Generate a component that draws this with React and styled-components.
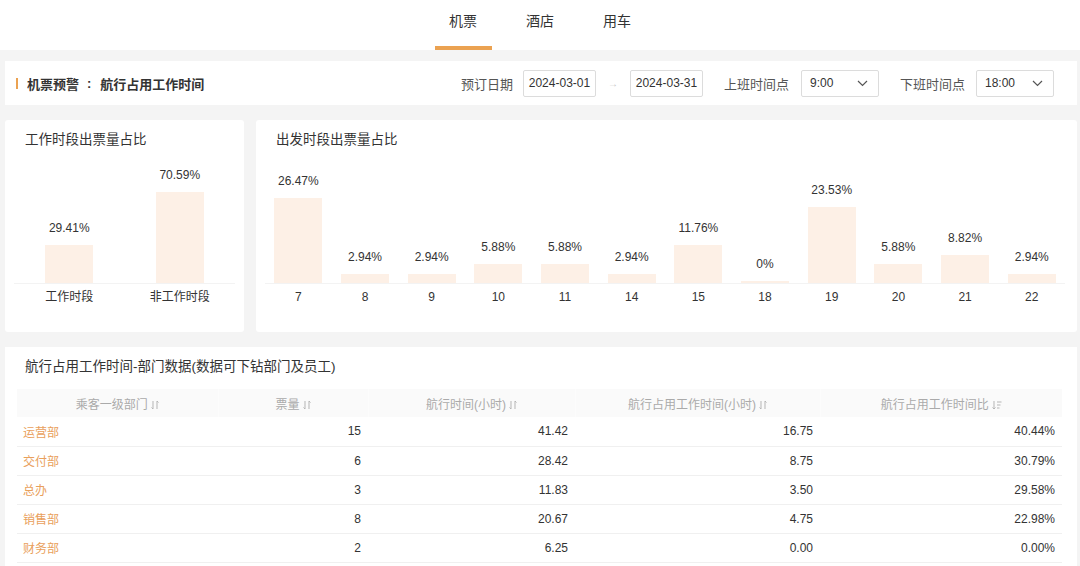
import React from "react";
import styled, { createGlobalStyle } from "styled-components";

const ORANGE = "#eba251";

const workData = [
  { label: "工作时段", value: 29.41 },
  { label: "非工作时段", value: 70.59 },
];

const hourData = [
  { label: "7", value: 26.47 },
  { label: "8", value: 2.94 },
  { label: "9", value: 2.94 },
  { label: "10", value: 5.88 },
  { label: "11", value: 5.88 },
  { label: "14", value: 2.94 },
  { label: "15", value: 11.76 },
  { label: "18", value: 0 },
  { label: "19", value: 23.53 },
  { label: "20", value: 5.88 },
  { label: "21", value: 8.82 },
  { label: "22", value: 2.94 },
];

const rows = [
  ["运营部", "15", "41.42", "16.75", "40.44%"],
  ["交付部", "6", "28.42", "8.75", "30.79%"],
  ["总办", "3", "11.83", "3.50", "29.58%"],
  ["销售部", "8", "20.67", "4.75", "22.98%"],
  ["财务部", "2", "6.25", "0.00", "0.00%"],
];

const columns = [
  { title: "乘客一级部门", width: 201 },
  { title: "票量", width: 150 },
  { title: "航行时间(小时)", width: 207 },
  { title: "航行占用工作时间(小时)", width: 245 },
  { title: "航行占用工作时间比", width: 242, sorted: true },
];

const GlobalStyle = createGlobalStyle`
  html, body {
    margin: 0;
    padding: 0;
    background: #f4f4f4;
    overflow: hidden;
  }
  body {
    font-family: "Liberation Sans", "Noto Sans CJK SC", sans-serif;
    color: #333;
  }
  * { box-sizing: border-box; }
`;

const Page = styled.div`
  width: 1080px;
  min-height: 566px;
  background: #f4f4f4;
`;

const Nav = styled.nav`
  height: 50px;
  background: #fff;
  display: flex;
  justify-content: center;
  gap: 20px;
`;

const Tab = styled.div`
  width: 57px;
  height: 50px;
  padding-top: 11px;
  text-align: center;
  font-size: 14px;
  line-height: 20px;
  color: #333;
  border-bottom: 4px solid ${(p) => (p.$active ? ORANGE : "transparent")};
`;

const Body = styled.div`
  padding: 11px 3px 0 5px;
  display: flex;
  flex-direction: column;
`;

const FilterBar = styled.div`
  height: 44px;
  background: #fff;
  display: flex;
  align-items: center;
  justify-content: space-between;
  padding: 0 23px 0 11px;
`;

const PageTitle = styled.div`
  display: flex;
  align-items: center;
  font-size: 13px;
  font-weight: bold;
  color: #333;
  &::before {
    content: "";
    width: 2px;
    height: 11px;
    background: ${ORANGE};
    margin-right: 9px;
  }
`;

const Colon = styled.span`
  margin: 0 9px 0 8px;
`;

const Filters = styled.div`
  display: flex;
  align-items: center;
`;

const FilterLabel = styled.span`
  font-size: 13px;
  color: #555;
  margin: 0 ${(p) => p.$gap || 10}px 0 ${(p) => p.$lead || 0}px;
`;

const Field = styled.div`
  height: 27px;
  width: ${(p) => p.$w}px;
  border: 1px solid #dcdcdc;
  border-radius: 2px;
  display: flex;
  align-items: center;
  justify-content: ${(p) => (p.$select ? "space-between" : "center")};
  padding: ${(p) => (p.$select ? "0 10px 0 8px" : "0")};
  font-size: 12px;
  color: #333;
  background: #fff;
`;

const RangeArrow = styled.span`
  color: #c8c8c8;
  font-size: 10px;
  margin: 0 12px;
`;

const ChartRow = styled.div`
  display: flex;
  gap: 12px;
  margin-top: 15px;
`;

const Card = styled.section`
  background: #fff;
  border-radius: 3px;
  height: 212px;
  width: ${(p) => p.$w}px;
  padding: 9px ${(p) => p.$pr || 9}px 0 9px;
`;

const CardTitle = styled.h3`
  margin: 0;
  padding-left: 11px;
  font-size: 13.5px;
  font-weight: normal;
  line-height: 22px;
  color: #333;
`;

const Plot = styled.div`
  height: 133px;
  display: flex;
  align-items: flex-end;
  border-bottom: 1px solid #f3f3f3;
`;

const BarCol = styled.div`
  flex: 1;
  display: flex;
  flex-direction: column;
  align-items: center;
  justify-content: flex-end;
`;

const BarValue = styled.span`
  font-size: 12px;
  line-height: 14px;
  color: #333;
  margin-bottom: 10px;
`;

const Bar = styled.div`
  width: 48px;
  background: #fdf0e6;
`;

const Axis = styled.div`
  display: flex;
  margin-top: 6px;
`;

const AxisLabel = styled.span`
  flex: 1;
  text-align: center;
  font-size: 12px;
  line-height: 14px;
  color: #333;
`;

const TableCard = styled.section`
  background: #fff;
  margin-top: 15px;
  padding: 10px 15px 0 12px;
  min-height: 230px;
`;

const TableTitle = styled.h3`
  margin: 0 0 12px;
  padding-left: 8px;
  font-size: 13.5px;
  font-weight: normal;
  line-height: 20px;
  color: #333;
`;

const Table = styled.table`
  width: 1045px;
  border-collapse: collapse;
  table-layout: fixed;
`;

const Th = styled.th`
  height: 28px;
  background: #fafafa;
  border-left: 1px solid #fcfcfc;
  font-size: 12px;
  font-weight: normal;
  color: #aaa;
  text-align: center;
  padding: 0;
  white-space: nowrap;
  &:first-child { border-left: none; }
  svg { vertical-align: -1px; margin-left: 3px; }
`;

const Td = styled.td`
  height: 29px;
  border-bottom: 1px solid #f0f0f0;
  font-size: 12px;
  color: ${(p) => (p.$link ? "#e9a05c" : "#333")};
  text-align: ${(p) => (p.$link ? "left" : "right")};
  padding: 0 7px 0 6px;
`;

function SortIcon({ sorted }) {
  if (sorted) {
    return (
      <svg width="10" height="10" viewBox="0 0 10 10" fill="none" stroke="#b5b5b5" strokeWidth="1">
        <path d="M2 1v8M0.5 7.5L2 9l1.5-1.5" />
        <path d="M5 2h4.5M5 5h3.5M5 8h2.5" />
      </svg>
    );
  }
  return (
    <svg width="8" height="10" viewBox="0 0 8 10" fill="none" stroke="#b5b5b5" strokeWidth="1">
      <path d="M2 1v8M0.5 7.5L2 9" />
      <path d="M6 9V1M6 1l1.5 1.5" />
    </svg>
  );
}

function Chevron() {
  return (
    <svg width="11" height="7" viewBox="0 0 11 7" fill="none" stroke="#555" strokeWidth="1.2">
      <path d="M1 1l4.5 4.5L10 1" />
    </svg>
  );
}

function BarChart({ data, scale }) {
  return (
    <>
      <Plot>
        {data.map((d) => (
          <BarCol key={d.label}>
            <BarValue>{d.value === 0 ? "0%" : `${d.value.toFixed(2)}%`}</BarValue>
            <Bar style={{ height: Math.max(2, d.value * scale) }} />
          </BarCol>
        ))}
      </Plot>
      <Axis>
        {data.map((d) => (
          <AxisLabel key={d.label}>{d.label}</AxisLabel>
        ))}
      </Axis>
    </>
  );
}

export default function App() {
  return (
    <Page>
      <GlobalStyle />
      <Nav>
        <Tab $active>机票</Tab>
        <Tab>酒店</Tab>
        <Tab>用车</Tab>
      </Nav>
      <Body>
        <FilterBar>
          <PageTitle>
            机票预警<Colon>:</Colon>航行占用工作时间
          </PageTitle>
          <Filters>
            <FilterLabel>预订日期</FilterLabel>
            <Field $w={73}>2024-03-01</Field>
            <RangeArrow>→</RangeArrow>
            <Field $w={73}>2024-03-31</Field>
            <FilterLabel $lead={21} $gap={12}>上班时间点</FilterLabel>
            <Field $w={78} $select>
              9:00
              <Chevron />
            </Field>
            <FilterLabel $lead={21} $gap={11}>下班时间点</FilterLabel>
            <Field $w={78} $select>
              18:00
              <Chevron />
            </Field>
          </Filters>
        </FilterBar>

        <ChartRow>
          <Card $w={239}>
            <CardTitle>工作时段出票量占比</CardTitle>
            <BarChart data={workData} scale={1.289} />
          </Card>
          <Card $w={821} $pr={12}>
            <CardTitle>出发时段出票量占比</CardTitle>
            <BarChart data={hourData} scale={3.211} />
          </Card>
        </ChartRow>

        <TableCard>
          <TableTitle>航行占用工作时间-部门数据(数据可下钻部门及员工)</TableTitle>
          <Table>
            <colgroup>
              {columns.map((c) => (
                <col key={c.title} style={{ width: c.width }} />
              ))}
            </colgroup>
            <thead>
              <tr>
                {columns.map((c) => (
                  <Th key={c.title}>
                    {c.title}
                    <SortIcon sorted={c.sorted} />
                  </Th>
                ))}
              </tr>
            </thead>
            <tbody>
              {rows.map((r) => (
                <tr key={r[0]}>
                  {r.map((cell, i) => (
                    <Td key={i} $link={i === 0}>
                      {cell}
                    </Td>
                  ))}
                </tr>
              ))}
            </tbody>
          </Table>
        </TableCard>
      </Body>
    </Page>
  );
}
